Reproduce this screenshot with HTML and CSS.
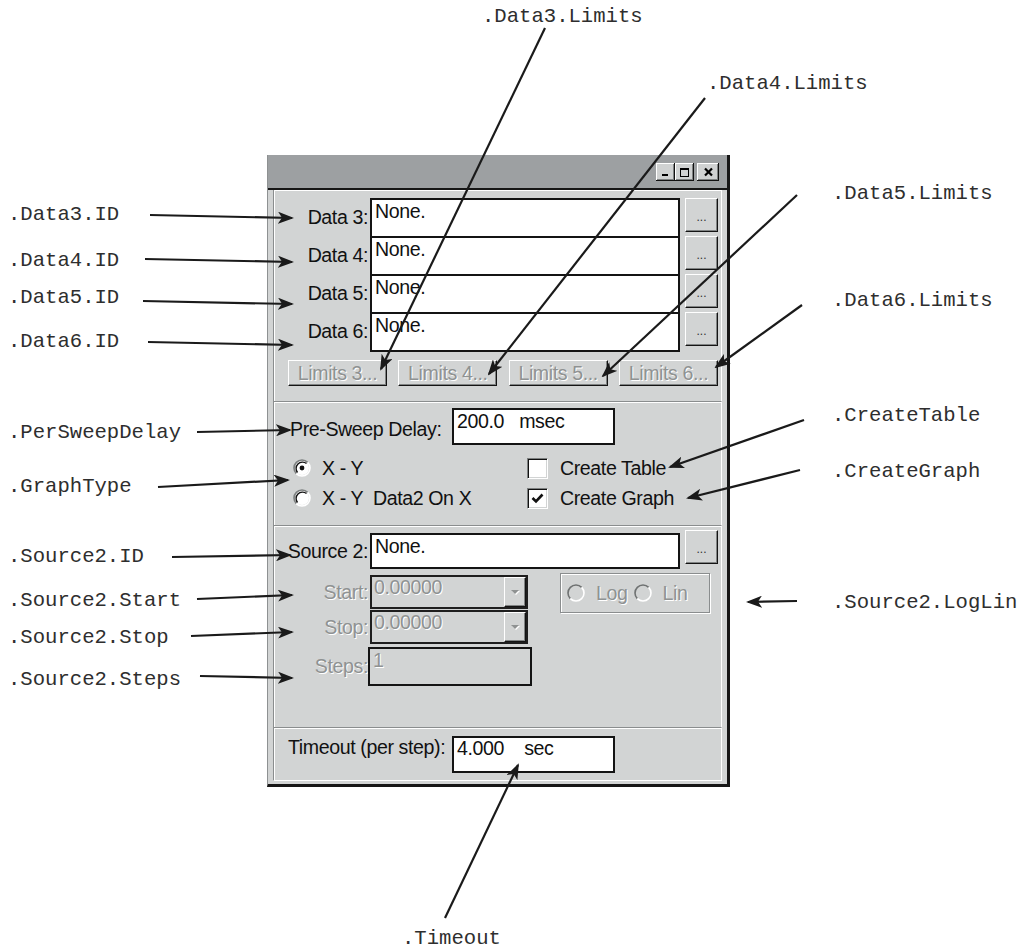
FILE: index.html
```html
<!DOCTYPE html>
<html lang="en">

<head>
    <meta charset="UTF-8">
    <title>Sweep Setup</title>
    <link rel="stylesheet" href="styles.css">
</head>

<body>
    <div class="page">

        <div class="window">
            <div class="titlebar">
                <span class="tb-btn tb-min">
                    <svg width="11" height="10" viewBox="0 0 11 10"><rect x="2" y="7" width="6" height="2" fill="#000"/></svg>
                </span>
                <span class="tb-btn tb-max">
                    <svg width="11" height="10" viewBox="0 0 11 10"><rect x="1.5" y="1.5" width="8" height="8" fill="none" stroke="#000"/><rect x="1" y="1" width="9" height="2" fill="#000"/></svg>
                </span>
                <span class="tb-btn tb-close">
                    <svg width="11" height="10" viewBox="0 0 11 10"><path d="M2 1.5 L9 8.5 M9 1.5 L2 8.5" stroke="#000" stroke-width="2.2"/></svg>
                </span>
            </div>

            <div class="body">
                <!-- data channels -->
                <div class="section s-data">
                    <div class="row data-row"><span class="lbl">Data 3:</span><span class="field wide">None.</span><span class="btn dots">...</span></div>
                    <div class="row data-row"><span class="lbl">Data 4:</span><span class="field wide">None.</span><span class="btn dots">...</span></div>
                    <div class="row data-row"><span class="lbl">Data 5:</span><span class="field wide">None.</span><span class="btn dots">...</span></div>
                    <div class="row data-row"><span class="lbl">Data 6:</span><span class="field wide">None.</span><span class="btn dots">...</span></div>
                    <div class="limits">
                        <span class="btn limit dim">Limits 3...</span>
                        <span class="btn limit dim">Limits 4...</span>
                        <span class="btn limit dim">Limits 5...</span>
                        <span class="btn limit dim">Limits 6...</span>
                    </div>
                </div>

                <!-- delay and output options -->
                <div class="section s-opts">
                    <div class="row delay-row"><span class="lbl-inline">Pre-Sweep Delay:</span><span class="field short">200.0   msec</span></div>
                    <div class="opts">
                        <div class="opt-col left">
                            <span class="opt">
                                <svg class="radio" width="18" height="18" viewBox="0 0 18 18">
                                    <circle cx="9" cy="9" r="7" fill="#fff"/>
                                    <path d="M3.34 14.66 A8 8 0 0 1 14.66 3.34" stroke="#7d8080" stroke-width="1.6" fill="none"/>
                                    <path d="M3.34 14.66 A8 8 0 0 0 14.66 3.34" stroke="#fff" stroke-width="1.6" fill="none"/>
                                    <path d="M4.5 13.5 A6.4 6.4 0 0 1 13.5 4.5" stroke="#111" stroke-width="1.4" fill="none"/>
                                    <circle cx="9" cy="9" r="2.4" fill="#111"/>
                                </svg>X - Y</span>
                            <span class="opt">
                                <svg class="radio" width="18" height="18" viewBox="0 0 18 18">
                                    <circle cx="9" cy="9" r="7" fill="#fff"/>
                                    <path d="M3.34 14.66 A8 8 0 0 1 14.66 3.34" stroke="#7d8080" stroke-width="1.6" fill="none"/>
                                    <path d="M3.34 14.66 A8 8 0 0 0 14.66 3.34" stroke="#fff" stroke-width="1.6" fill="none"/>
                                    <path d="M4.5 13.5 A6.4 6.4 0 0 1 13.5 4.5" stroke="#111" stroke-width="1.4" fill="none"/>
                                </svg>X - Y  Data2 On X</span>
                        </div>
                        <div class="opt-col">
                            <span class="opt"><span class="check"></span>Create Table</span>
                            <span class="opt"><span class="check"><svg width="13" height="11" viewBox="0 0 13 11"><path d="M1.5 5 L5 8.5 L11.5 1.5" stroke="#111" stroke-width="2.6" fill="none"/></svg></span>Create Graph</span>
                        </div>
                    </div>
                </div>

                <!-- swept source -->
                <div class="section s-source">
                    <div class="row src-row"><span class="lbl">Source 2:</span><span class="field wide src">None.</span><span class="btn dots src-dots">...</span></div>
                    <div class="sweep">
                        <div class="sweep-rows">
                            <div class="row sweep-row"><span class="lbl dim">Start:</span><span class="combo"><span class="combo-text dim">0.00000</span><span class="btn combo-arrow"><span class="tri"></span></span></span></div>
                            <div class="row sweep-row"><span class="lbl dim">Stop:</span><span class="combo"><span class="combo-text dim">0.00000</span><span class="btn combo-arrow"><span class="tri"></span></span></span></div>
                            <div class="row steps-row"><span class="lbl dim">Steps:</span><span class="field steps dim">1</span></div>
                        </div>
                        <div class="loglin">
                            <span class="opt dim">
                                <svg class="radio" width="18" height="18" viewBox="0 0 18 18">
                                    <path d="M3.34 14.66 A8 8 0 0 1 14.66 3.34" stroke="#6f7272" stroke-width="1.6" fill="none"/>
                                    <path d="M3.34 14.66 A8 8 0 0 0 14.66 3.34" stroke="#fff" stroke-width="1.6" fill="none"/>
                                </svg>Log</span>
                            <span class="opt dim">
                                <svg class="radio" width="18" height="18" viewBox="0 0 18 18">
                                    <path d="M3.34 14.66 A8 8 0 0 1 14.66 3.34" stroke="#6f7272" stroke-width="1.6" fill="none"/>
                                    <path d="M3.34 14.66 A8 8 0 0 0 14.66 3.34" stroke="#fff" stroke-width="1.6" fill="none"/>
                                </svg>Lin</span>
                        </div>
                    </div>
                </div>

                <!-- timeout -->
                <div class="section s-timeout">
                    <div class="row timeout-row"><span class="lbl-inline">Timeout (per step):</span><span class="field short tmo">4.000    sec</span></div>
                </div>
            </div>
        </div>

        <svg class="arrows" width="1026" height="949" viewBox="0 0 1026 949">
            <defs>
                <marker id="head" markerWidth="16" markerHeight="12" refX="14" refY="6" orient="auto" markerUnits="userSpaceOnUse">
                    <path d="M0 0 L16 6 L0 12 L4 6 Z" fill="#1a1a1a"/>
                </marker>
            </defs>
            <g stroke="#1a1a1a" stroke-width="2.2" marker-end="url(#head)">
                <line x1="545" y1="28" x2="381" y2="369"/>
                <line x1="705" y1="98" x2="489" y2="374"/>
                <line x1="797" y1="195" x2="603" y2="376"/>
                <line x1="802" y1="305" x2="716" y2="367"/>
                <line x1="804" y1="420" x2="670" y2="467"/>
                <line x1="800" y1="470" x2="688" y2="498"/>
                <line x1="797" y1="601" x2="748" y2="602"/>
                <line x1="150" y1="215" x2="292" y2="218"/>
                <line x1="145" y1="259" x2="292" y2="262"/>
                <line x1="143" y1="301" x2="292" y2="304"/>
                <line x1="148" y1="342" x2="292" y2="345"/>
                <line x1="197" y1="432" x2="290" y2="430"/>
                <line x1="158" y1="487" x2="288" y2="480"/>
                <line x1="172" y1="557" x2="290" y2="555"/>
                <line x1="197" y1="599" x2="292" y2="595"/>
                <line x1="191" y1="636" x2="292" y2="632"/>
                <line x1="200" y1="676" x2="292" y2="678"/>
                <line x1="445" y1="918" x2="518" y2="765"/>
            </g>
        </svg>

        <div class="note n-d3l">.Data3.Limits</div>
        <div class="note n-d4l">.Data4.Limits</div>
        <div class="note n-d5l">.Data5.Limits</div>
        <div class="note n-d6l">.Data6.Limits</div>
        <div class="note n-table">.CreateTable</div>
        <div class="note n-graph">.CreateGraph</div>
        <div class="note n-loglin">.Source2.LogLin</div>
        <div class="note n-d3">.Data3.ID</div>
        <div class="note n-d4">.Data4.ID</div>
        <div class="note n-d5">.Data5.ID</div>
        <div class="note n-d6">.Data6.ID</div>
        <div class="note n-delay">.PerSweepDelay</div>
        <div class="note n-gtype">.GraphType</div>
        <div class="note n-src">.Source2.ID</div>
        <div class="note n-start">.Source2.Start</div>
        <div class="note n-stop">.Source2.Stop</div>
        <div class="note n-steps">.Source2.Steps</div>
        <div class="note n-tmo">.Timeout</div>
    </div>
</body>

</html>
```

FILE: styles.css
```css
* {
    box-sizing: border-box;
}

body {
    margin: 0;
    background: #fff;
}

.page {
    position: relative;
    width: 1026px;
    height: 949px;
    overflow: hidden;
    font-family: "Liberation Sans", Arial, sans-serif;
}

/* dialog window */
.window {
    position: absolute;
    left: 267px;
    top: 155px;
    width: 463px;
    background: #d2d4d4;
    border-left: 1px solid #8e9192;
    border-right: 3px solid #161616;
    border-bottom: 3px solid #161616;
    font-size: 19.6px;
    letter-spacing: -0.4px;
    color: #111;
}

.titlebar {
    height: 35px;
    background: #9da0a2;
    border-bottom: 2px solid #161616;
    display: flex;
    justify-content: flex-end;
    padding: 8px 8px 0 0;
}

.tb-btn {
    width: 19px;
    height: 18px;
    background: #d0d2d2;
    box-shadow: inset -1px -1px #111, inset 1px 1px #fff, inset -2px -2px #7f8282;
    display: flex;
    align-items: center;
    justify-content: center;
}

.tb-close {
    width: 22px;
    margin-left: 3px;
}

.body {
    padding: 0 5px 3px;
}

.section {
    border-left: 1px solid #8a8d8e;
    border-top: 1px solid #8a8d8e;
    border-right: 1px solid #fff;
    box-shadow: inset 1px 1px 0 #fff;
}

.row {
    display: flex;
    align-items: flex-start;
}

.lbl {
    width: 96px;
    flex: none;
    text-align: right;
    padding-right: 2px;
    white-space: nowrap;
}

.lbl-inline {
    flex: none;
    white-space: nowrap;
}

.field {
    flex: none;
    background: #fff;
    border: 2px solid #141414;
    padding: 1px 0 0 3px;
    line-height: 21px;
    white-space: pre;
}

.btn {
    background: #d2d4d4;
    border: 1px solid;
    border-color: #fff #141414 #141414 #fff;
    box-shadow: inset -1px -1px 0 #808383;
    display: flex;
    align-items: center;
    justify-content: center;
    white-space: nowrap;
}

.dim {
    color: #8f9292;
    text-shadow: 1px 1px 0 #fff;
}

/* data rows */
.s-data {
    height: 211px;
    border-top: none;
    padding: 8px 3px 0 0;
}

.data-row {
    height: 38px;
}

.data-row .lbl {
    line-height: 38px;
}

.wide {
    width: 310px;
    height: 40px;
}

.dots {
    width: 33px;
    height: 34px;
    margin-left: 5px;
    font-size: 12px;
    letter-spacing: 0;
    color: #333;
    align-items: flex-end;
    padding-bottom: 7px;
}

.limits {
    display: flex;
    justify-content: space-between;
    margin: 10px 0 0 14px;
}

.limit {
    width: 99px;
    height: 26px;
}

/* delay + options */
.s-opts {
    height: 124px;
    padding: 6px 0 0 16px;
}

.delay-row {
    align-items: center;
}

.delay-row .lbl-inline {
    width: 162px;
    padding-top: 6px;
}

.short {
    width: 163px;
    height: 37px;
}

.opts {
    display: flex;
    margin: 8px 0 0 3px;
}

.opt-col {
    display: flex;
    flex-direction: column;
}

.opt-col.left {
    width: 234px;
}

.opt {
    display: flex;
    align-items: center;
    height: 30px;
    white-space: pre;
}

.radio {
    flex: none;
    margin-right: 11px;
}

.check {
    width: 21px;
    height: 21px;
    margin-right: 12px;
    background: #fff;
    border: 1px solid;
    border-color: #7d8080 #fff #fff #7d8080;
    box-shadow: inset 1px 1px 0 #111, inset -1px -1px 0 #d2d4d4;
    display: flex;
    align-items: center;
    justify-content: center;
}

/* source 2 */
.s-source {
    height: 202px;
    padding: 7px 3px 0 0;
}

.src-row {
    height: 36px;
}

.src-row .lbl {
    line-height: 36px;
}

.wide.src {
    height: 36px;
}

.src-dots {
    margin-top: -3px;
}

.sweep {
    display: flex;
    margin-top: 6px;
}

.sweep-rows {
    width: 258px;
    flex: none;
}

.sweep-row {
    height: 35px;
}

.sweep-row .lbl {
    line-height: 34px;
}

.combo {
    width: 158px;
    height: 34px;
    border: 2px solid #1e1e1e;
    display: flex;
    justify-content: space-between;
    padding-left: 2px;
}

.combo-text {
    line-height: 21px;
}

.combo-arrow {
    width: 22px;
    height: 30px;
    flex: none;
}

.tri {
    width: 0;
    height: 0;
    border-left: 4px solid transparent;
    border-right: 4px solid transparent;
    border-top: 4px solid #8f9292;
    filter: drop-shadow(1px 1px 0 #fff);
}

.steps-row {
    margin-top: 2px;
}

.steps-row .lbl {
    line-height: 39px;
}

.field.steps {
    width: 164px;
    height: 39px;
    margin-left: -2px;
    background: #d2d4d4;
}

.loglin {
    width: 150px;
    height: 40px;
    margin: -2px 0 0 28px;
    border: 1px solid #8a8d8e;
    box-shadow: 1px 1px 0 #fff, inset 1px 1px 0 #fff;
    display: flex;
    align-items: center;
    padding-left: 6px;
}

.loglin .opt + .opt {
    margin-left: 6px;
}

/* timeout */
.s-timeout {
    height: 54px;
    padding: 8px 0 0 14px;
    border-bottom: 1px solid #fff;
}

.timeout-row .lbl-inline {
    width: 164px;
}

.field.tmo {
    padding-top: 0;
}

/* annotations */
.arrows {
    position: absolute;
    left: 0;
    top: 0;
    pointer-events: none;
}

.note {
    position: absolute;
    font-family: "Liberation Mono", "Courier New", monospace;
    font-size: 20.6px;
    line-height: 24px;
    color: #2e2e2e;
    white-space: nowrap;
}

.n-d3l { left: 482px; top: 5px; }
.n-d4l { left: 707px; top: 72px; }
.n-d5l { left: 832px; top: 182px; }
.n-d6l { left: 832px; top: 289px; }
.n-table { left: 832px; top: 404px; }
.n-graph { left: 832px; top: 460px; }
.n-loglin { left: 832px; top: 591px; }
.n-d3 { left: 8px; top: 203px; }
.n-d4 { left: 8px; top: 249px; }
.n-d5 { left: 8px; top: 286px; }
.n-d6 { left: 8px; top: 330px; }
.n-delay { left: 8px; top: 421px; }
.n-gtype { left: 8px; top: 475px; }
.n-src { left: 8px; top: 545px; }
.n-start { left: 8px; top: 589px; }
.n-stop { left: 8px; top: 626px; }
.n-steps { left: 8px; top: 668px; }
.n-tmo { left: 402px; top: 927px; }
```
